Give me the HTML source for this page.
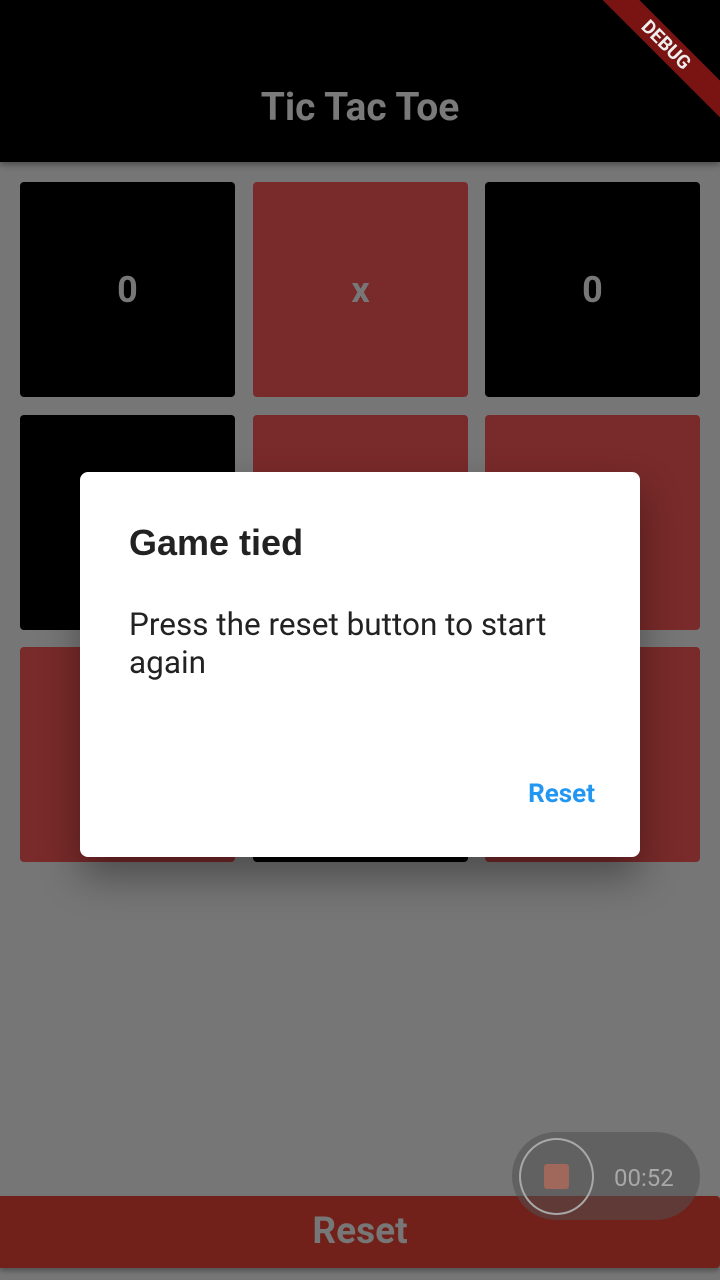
<!DOCTYPE html>
<html><head><meta charset="utf-8"><style>
*{margin:0;padding:0;box-sizing:border-box}
body{width:720px;height:1280px;background:#767676;position:relative;overflow:hidden;font-family:"Roboto","Liberation Sans",sans-serif}
.bar{position:absolute;left:0;top:0;width:720px;height:162px;background:#000;box-shadow:0 3px 6px rgba(0,0,0,.35)}
.title{position:absolute;top:84px;width:720px;text-align:center;color:#7a7a7a;font-size:39px;font-weight:bold}
.c{position:absolute;width:215px;height:215px;border-radius:4px;display:flex;align-items:center;justify-content:center;color:#777;font-size:36px;font-weight:bold}
.b{background:#000}.r{background:#792a2a}
.dlg{position:absolute;left:80px;top:472px;width:560px;height:385px;background:#fff;border-radius:8px;box-shadow:0 20px 40px rgba(0,0,0,.35)}
.dlg h1{position:absolute;left:49px;top:50px;font-size:36px;font-weight:bold;color:#222;font-family:"Liberation Sans",sans-serif}
.dlg p{position:absolute;left:49px;top:134px;width:480px;font-size:31.5px;line-height:38px;color:#222}
.dlg .btn{position:absolute;right:45px;top:307px;font-size:26px;color:#2196f3;font-weight:bold}
.reset{position:absolute;left:0;top:1196px;width:720px;height:72px;background:#71201a;border-radius:0 4px 4px 0;color:#777;font-size:37px;font-weight:bold;text-align:center;line-height:72px;box-shadow:0 3px 5px rgba(0,0,0,.3)}
.pill{position:absolute;left:512px;top:1132px;width:188px;height:88px;border-radius:44px;background:rgba(80,80,80,.55)}
.ring{position:absolute;left:519px;top:1138px;width:75px;height:77px;border:2px solid #a8a8a8;border-radius:50%}
.sq{position:absolute;left:544px;top:1164px;width:25px;height:25px;background:#a0685a;border-radius:3px}
.time{position:absolute;left:614px;top:1164px;font-size:24px;color:#a8a8a8}
.dbg{position:absolute;right:-46px;top:32px;width:200px;height:26px;background:#7a1412;transform:rotate(45deg);color:#eee;font-size:19px;font-weight:bold;text-align:center;line-height:26px}
</style></head><body>
<div class="bar"><div class="title">Tic Tac Toe</div></div>
<div class="dbg">DEBUG</div>
<div class="c b" style="left:20px;top:182px">0</div>
<div class="c r" style="left:253px;top:182px">x</div>
<div class="c b" style="left:485px;top:182px">0</div>
<div class="c b" style="left:20px;top:415px"></div>
<div class="c r" style="left:253px;top:415px"></div>
<div class="c r" style="left:485px;top:415px"></div>
<div class="c r" style="left:20px;top:647px"></div>
<div class="c b" style="left:253px;top:647px"></div>
<div class="c r" style="left:485px;top:647px"></div>
<div class="dlg"><h1>Game tied</h1><p>Press the reset button to start again</p><div class="btn">Reset</div></div>
<div class="reset">Reset</div>
<div class="pill"></div><div class="ring"></div><div class="sq"></div><div class="time">00:52</div>
</body></html>
